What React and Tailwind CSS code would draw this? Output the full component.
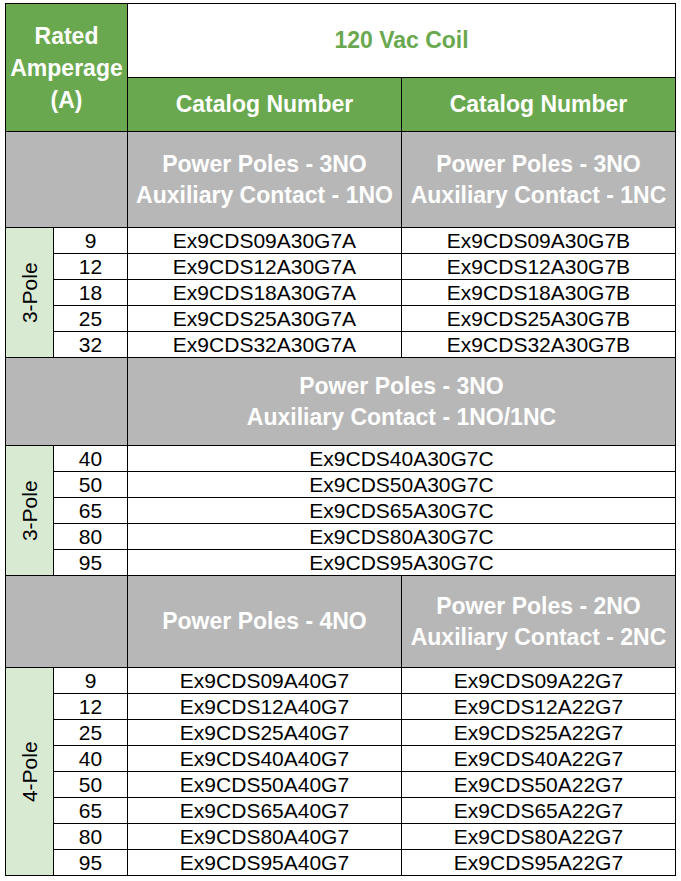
import React from 'react';

const GREEN = 'bg-[#6aa84f]';

const groupA = [
  ['9', 'Ex9CDS09A30G7A', 'Ex9CDS09A30G7B'],
  ['12', 'Ex9CDS12A30G7A', 'Ex9CDS12A30G7B'],
  ['18', 'Ex9CDS18A30G7A', 'Ex9CDS18A30G7B'],
  ['25', 'Ex9CDS25A30G7A', 'Ex9CDS25A30G7B'],
  ['32', 'Ex9CDS32A30G7A', 'Ex9CDS32A30G7B'],
];

const groupB = [
  ['40', 'Ex9CDS40A30G7C'],
  ['50', 'Ex9CDS50A30G7C'],
  ['65', 'Ex9CDS65A30G7C'],
  ['80', 'Ex9CDS80A30G7C'],
  ['95', 'Ex9CDS95A30G7C'],
];

const groupC = [
  ['9', 'Ex9CDS09A40G7', 'Ex9CDS09A22G7'],
  ['12', 'Ex9CDS12A40G7', 'Ex9CDS12A22G7'],
  ['25', 'Ex9CDS25A40G7', 'Ex9CDS25A22G7'],
  ['40', 'Ex9CDS40A40G7', 'Ex9CDS40A22G7'],
  ['50', 'Ex9CDS50A40G7', 'Ex9CDS50A22G7'],
  ['65', 'Ex9CDS65A40G7', 'Ex9CDS65A22G7'],
  ['80', 'Ex9CDS80A40G7', 'Ex9CDS80A22G7'],
  ['95', 'Ex9CDS95A40G7', 'Ex9CDS95A22G7'],
];

function Cell({ className = '', children }) {
  return <div className={`flex items-center justify-center text-center ${className}`}>{children}</div>;
}

function GrayHead({ children, className = '' }) {
  return (
    <Cell className={`bg-[#b7b7b7] text-white font-bold text-[23px] leading-[31px] ${className}`}>
      <div>{children}</div>
    </Cell>
  );
}

function PoleLabel({ text, span }) {
  return (
    <Cell className={`bg-[#d9ead3] ${span}`}>
      <span className="-rotate-90 whitespace-nowrap text-[21px]">{text}</span>
    </Cell>
  );
}

export default function App() {
  return (
    <div className="bg-white min-h-[881px] pt-[3px] pl-[5px] font-['Liberation_Sans',Arial,sans-serif] text-black">
      <div className="grid w-[671px] bg-black gap-px p-px grid-cols-[47px_73px_273px_273px] grid-rows-[73px_53px_95px_repeat(5,25px)_87px_repeat(5,25px)_91px_repeat(8,25px)]">
        {/* header */}
        <Cell className={`${GREEN} col-span-2 row-span-2 text-white font-bold text-[23px] leading-[32px]`}>
          <div>Rated<br />Amperage<br />(A)</div>
        </Cell>
        <Cell className="bg-white col-span-2 text-[#6aa84f] font-bold text-[23px]">120 Vac Coil</Cell>
        <Cell className={`${GREEN} text-white font-bold text-[23px]`}>Catalog Number</Cell>
        <Cell className={`${GREEN} text-white font-bold text-[23px]`}>Catalog Number</Cell>

        {/* 3-pole, NO / NC aux */}
        <Cell className="bg-[#b7b7b7] col-span-2" />
        <GrayHead>Power Poles - 3NO<br />Auxiliary Contact - 1NO</GrayHead>
        <GrayHead>Power Poles - 3NO<br />Auxiliary Contact - 1NC</GrayHead>
        <PoleLabel text="3-Pole" span="row-span-5" />
        {groupA.map(([amp, a, b]) => (
          <React.Fragment key={a}>
            <Cell className="bg-white text-[21px]">{amp}</Cell>
            <Cell className="bg-white text-[21px]">{a}</Cell>
            <Cell className="bg-white text-[21px]">{b}</Cell>
          </React.Fragment>
        ))}

        {/* 3-pole, NO/NC aux */}
        <Cell className="bg-[#b7b7b7] col-span-2" />
        <GrayHead className="col-span-2">Power Poles - 3NO<br />Auxiliary Contact - 1NO/1NC</GrayHead>
        <PoleLabel text="3-Pole" span="row-span-5" />
        {groupB.map(([amp, a]) => (
          <React.Fragment key={a}>
            <Cell className="bg-white text-[21px]">{amp}</Cell>
            <Cell className="bg-white text-[21px] col-span-2">{a}</Cell>
          </React.Fragment>
        ))}

        {/* 4-pole */}
        <Cell className="bg-[#b7b7b7] col-span-2" />
        <GrayHead>Power Poles - 4NO</GrayHead>
        <GrayHead>Power Poles - 2NO<br />Auxiliary Contact - 2NC</GrayHead>
        <PoleLabel text="4-Pole" span="row-span-8" />
        {groupC.map(([amp, a, b]) => (
          <React.Fragment key={a}>
            <Cell className="bg-white text-[21px]">{amp}</Cell>
            <Cell className="bg-white text-[21px]">{a}</Cell>
            <Cell className="bg-white text-[21px]">{b}</Cell>
          </React.Fragment>
        ))}
      </div>
    </div>
  );
}
